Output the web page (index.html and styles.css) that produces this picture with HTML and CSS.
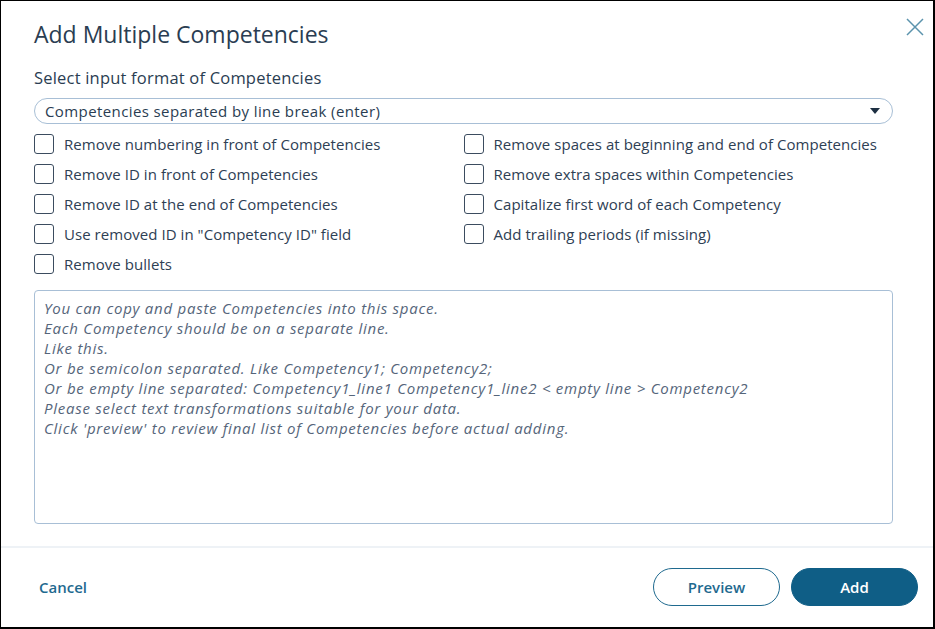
FILE: index.html
```html
<!DOCTYPE html>
<html>
<head>
<meta charset="utf-8">
<link rel="stylesheet" href="styles.css">
</head>
<body>
<div class="dialog">
  <div class="body">
    <div class="header">
      <h1 class="title">Add Multiple Competencies</h1>
      <button class="close" aria-label="Close">
        <svg width="18" height="18" viewBox="0 0 18 18"><path d="M1 1L17 17M17 1L1 17" stroke="#5b93ad" stroke-width="1.5" fill="none"/></svg>
      </button>
    </div>
    <div class="label">Select input format of Competencies</div>
    <div class="select">
      <span>Competencies separated by line break (enter)</span>
      <svg class="caret" width="10" height="6" viewBox="0 0 10 6"><path d="M0 0H10L5 6Z" fill="#1d2f42"/></svg>
    </div>
    <div class="options">
      <div class="col">
        <label class="opt"><span class="box"></span>Remove numbering in front of Competencies</label>
        <label class="opt"><span class="box"></span>Remove ID in front of Competencies</label>
        <label class="opt"><span class="box"></span>Remove ID at the end of Competencies</label>
        <label class="opt"><span class="box"></span>Use removed ID in "Competency ID" field</label>
        <label class="opt"><span class="box"></span>Remove bullets</label>
      </div>
      <div class="col">
        <label class="opt"><span class="box"></span>Remove spaces at beginning and end of Competencies</label>
        <label class="opt"><span class="box"></span>Remove extra spaces within Competencies</label>
        <label class="opt"><span class="box"></span>Capitalize first word of each Competency</label>
        <label class="opt"><span class="box"></span>Add trailing periods (if missing)</label>
      </div>
    </div>
    <div class="textarea">
      <div>You can copy and paste Competencies into this space.</div>
      <div>Each Competency should be on a separate line.</div>
      <div>Like this.</div>
      <div>Or be semicolon separated. Like Competency1; Competency2;</div>
      <div>Or be empty line separated: Competency1_line1 Competency1_line2 &lt; empty line &gt; Competency2</div>
      <div>Please select text transformations suitable for your data.</div>
      <div>Click 'preview' to review final list of Competencies before actual adding.</div>
    </div>
  </div>
  <div class="footer">
    <button class="cancel">Cancel</button>
    <div class="actions">
      <button class="btn outline">Preview</button>
      <button class="btn primary">Add</button>
    </div>
  </div>
</div>
</body>
</html>
```

FILE: styles.css
```css
* { box-sizing: border-box; }
html, body { margin: 0; padding: 0; background: #fff; }
body {
  font-family: "Open Sans", "Noto Sans", sans-serif;
  color: #2c3e52;
}
.dialog {
  width: 935px;
  height: 629px;
  border: 1px solid #000;
  border-right-width: 2px;
  border-bottom-width: 2px;
  display: flex;
  flex-direction: column;
  background: #fff;
}
.body {
  padding: 0 40px 0 33px;
  flex: 1;
  border-bottom: 2px solid #eef2f6;
}
.header {
  display: flex;
  justify-content: space-between;
  align-items: flex-start;
  height: 56px;
}
.title {
  margin: 18px 0 0;
  font-size: 23px;
  font-weight: 500;
  line-height: 30px;
  color: #2a3d52;
}
.close {
  background: none;
  border: 0;
  padding: 0;
  margin: 17px -31px 0 0;
  width: 18px;
  height: 18px;
  cursor: pointer;
}
.close svg { display: block; }
.label {
  font-size: 16.5px;
  font-weight: 500;
  letter-spacing: 0.2px;
  line-height: 22px;
  margin-top: 10px;
  color: #2a3d52;
}
.select {
  margin-top: 9px;
  height: 26px;
  border: 1px solid #a8bfd6;
  border-radius: 13px;
  display: flex;
  align-items: center;
  justify-content: space-between;
  padding: 0 12px 0 10px;
  font-size: 15px;
  letter-spacing: 0.4px;
  color: #2a3d52;
}
.caret { display: block; }
.options {
  display: flex;
  margin-top: 5px;
}
.col {
  width: 430px;
  display: flex;
  flex-direction: column;
}
.opt {
  height: 30px;
  display: flex;
  align-items: center;
  font-size: 15px;
  letter-spacing: 0.05px;
  color: #2e4054;
}
.box {
  width: 20px;
  height: 20px;
  border: 1.5px solid #3b4c5f;
  border-radius: 3px;
  margin-right: 10px;
  flex: none;
}
.textarea {
  margin-top: 11px;
  height: 234px;
  border: 1px solid #a8bfd6;
  border-radius: 4px;
  padding: 7px 9px;
  font-style: italic;
  font-size: 15px;
  letter-spacing: 0.75px;
  line-height: 20px;
  color: #55657a;
  font-weight: 400;
}
.footer {
  height: 79px;
  display: flex;
  align-items: center;
  justify-content: space-between;
  padding: 0 15px 2px 38px;
}
.cancel {
  background: none;
  border: 0;
  padding: 0;
  font-family: inherit;
  font-size: 15px;
  font-weight: 600;
  color: #1f6a8f;
  cursor: pointer;
}
.actions { display: flex; gap: 11px; }
.btn {
  width: 127px;
  height: 38px;
  border-radius: 19px;
  font-family: inherit;
  font-size: 15px;
  font-weight: 600;
  cursor: pointer;
}
.outline {
  background: #fff;
  border: 1px solid #1f6a8f;
  color: #1f6a8f;
}
.primary {
  background: #0f5e86;
  border: 1px solid #0f5e86;
  color: #fff;
}
```
